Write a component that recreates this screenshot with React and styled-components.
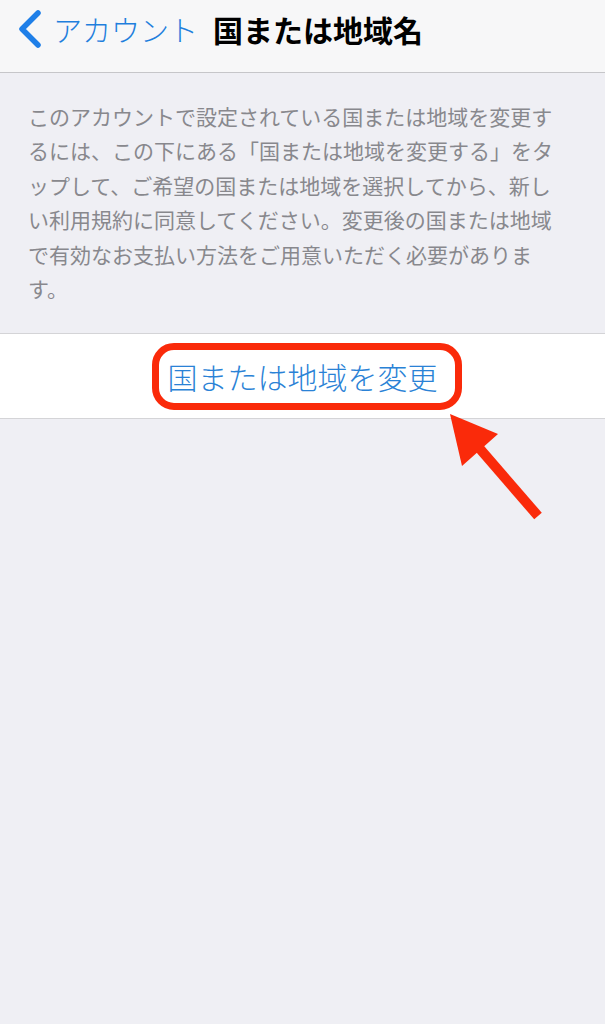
import React from "react";
import styled, { createGlobalStyle } from "styled-components";

const GlobalStyle = createGlobalStyle`
  html, body {
    margin: 0;
    padding: 0;
    background: #efeff4;
  }
  body {
    font-family: "Noto Sans CJK JP", "Noto Sans", sans-serif;
    -webkit-font-smoothing: antialiased;
  }
`;

const Page = styled.div`
  position: relative;
  width: 605px;
  min-height: 1024px;
  background: #efeff4;
  overflow: hidden;
`;

const NavBar = styled.header`
  height: 73px;
  box-sizing: border-box;
  display: flex;
  align-items: flex-start;
  padding: 9px 0 0 16px;
  background: #f7f7f8;
  border-bottom: 1px solid #c6c6c9;
`;

const BackButton = styled.button`
  display: flex;
  align-items: center;
  gap: 11px;
  height: 40px;
  padding: 0;
  border: none;
  background: none;
  color: #1f7fdd;
  font-family: inherit;
  font-size: 29px;
  font-weight: 300;
  line-height: 40px;
  cursor: pointer;
`;

const Title = styled.h1`
  margin: 0 0 0 15px;
  font-size: 30px;
  font-weight: 700;
  line-height: 40px;
  color: #000;
`;

const Footnote = styled.p`
  margin: 0;
  padding: 26px 0 0 28px;
  font-size: 21px;
  line-height: 34.4px;
  color: #88888d;
  white-space: nowrap;
`;

const Line = styled.span`
  display: block;
`;

const Cell = styled.div`
  position: relative;
  margin-top: 28px;
  height: 84px;
  display: flex;
  align-items: center;
  justify-content: center;
  background: #fff;
  border-top: 1px solid #d4d4d7;
  border-bottom: 1px solid #d4d4d7;
`;

const CellLink = styled.span`
  font-size: 30px;
  font-weight: 300;
  line-height: 40px;
  color: #2a82d6;
`;

const Highlight = styled.div`
  position: absolute;
  left: 152px;
  top: 9px;
  width: 310px;
  height: 67px;
  box-sizing: border-box;
  border: 7px solid #fa2a0a;
  border-radius: 22px;
  pointer-events: none;
`;

const ArrowMark = styled.svg`
  position: absolute;
  left: 440px;
  top: 406px;
  pointer-events: none;
`;

const lines = [
  "このアカウントで設定されている国または地域を変更す",
  "るには、この下にある「国または地域を変更する」をタ",
  "ップして、ご希望の国または地域を選択してから、新し",
  "い利用規約に同意してください。変更後の国または地域",
  "で有効なお支払い方法をご用意いただく必要がありま",
  "す。",
];

function Chevron() {
  return (
    <svg width="26" height="38" viewBox="0 0 26 38">
      <path
        d="M22 3 L6 19 L22 35"
        fill="none"
        stroke="#1f7fe8"
        strokeWidth="5.5"
        strokeLinecap="round"
        strokeLinejoin="round"
      />
    </svg>
  );
}

export default function App() {
  return (
    <Page>
      <GlobalStyle />
      <NavBar>
        <BackButton>
          <Chevron />
          アカウント
        </BackButton>
        <Title>国または地域名</Title>
      </NavBar>

      <Footnote>
        {lines.map((l) => (
          <Line key={l}>{l}</Line>
        ))}
      </Footnote>

      <Cell>
        <CellLink>国または地域を変更</CellLink>
        <Highlight />
      </Cell>

      <ArrowMark width="110" height="120" viewBox="0 0 110 120">
        <line x1="98" y1="110" x2="34" y2="36" stroke="#fa2a0a" strokeWidth="10" />
        <polygon points="10,8 58,28 22,60" fill="#fa2a0a" />
      </ArrowMark>
    </Page>
  );
}
